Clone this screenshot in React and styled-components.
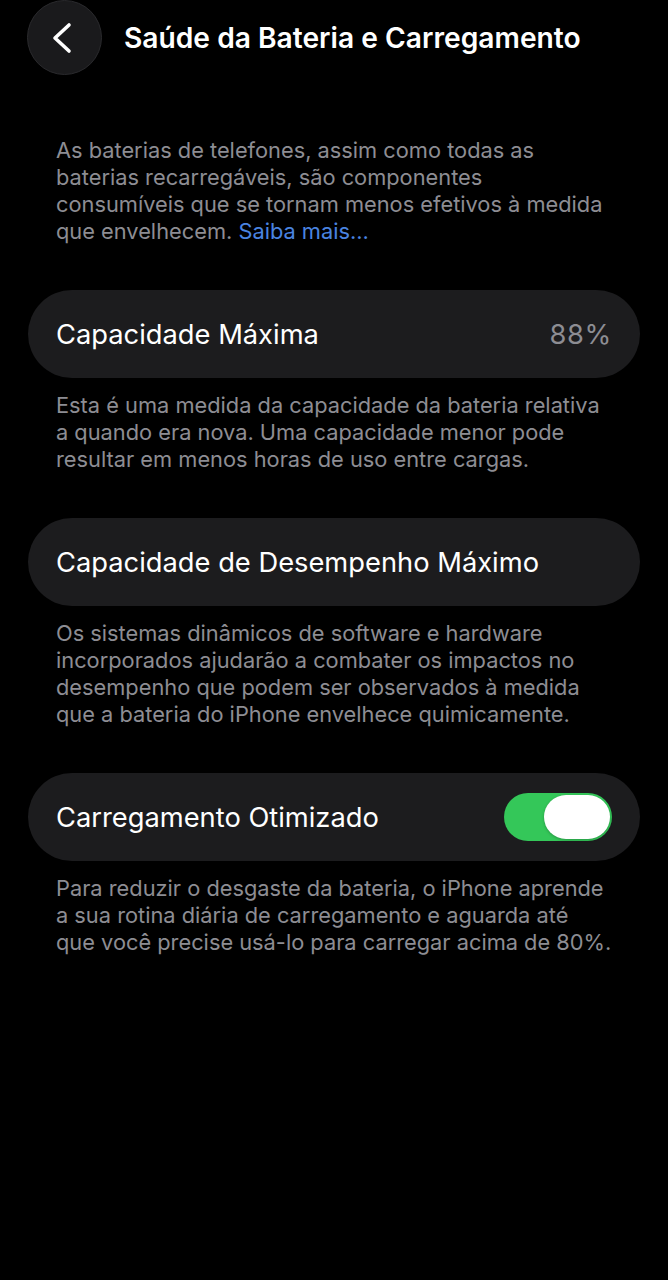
import React from "react";
import styled, { createGlobalStyle } from "styled-components";

const GlobalStyle = createGlobalStyle`
  html, body {
    margin: 0;
    padding: 0;
    background: #000;
  }
  body {
    font-family: Inter, "Noto Sans", "Liberation Sans", sans-serif;
    -webkit-font-smoothing: antialiased;
  }
`;

const sections = [
  {
    id: "capacity",
    label: "Capacidade Máxima",
    value: "88%",
    footer: [
      "Esta é uma medida da capacidade da bateria relativa",
      "a quando era nova. Uma capacidade menor pode",
      "resultar em menos horas de uso entre cargas.",
    ],
  },
  {
    id: "performance",
    label: "Capacidade de Desempenho Máximo",
    footer: [
      "Os sistemas dinâmicos de software e hardware",
      "incorporados ajudarão a combater os impactos no",
      "desempenho que podem ser observados à medida",
      "que a bateria do iPhone envelhece quimicamente.",
    ],
  },
  {
    id: "optimized",
    label: "Carregamento Otimizado",
    toggle: true,
    footer: [
      "Para reduzir o desgaste da bateria, o iPhone aprende",
      "a sua rotina diária de carregamento e aguarda até",
      "que você precise usá-lo para carregar acima de 80%.",
    ],
  },
];

const Lines = ({ lines }) =>
  lines.map((l, i) => (
    <React.Fragment key={i}>
      {l}
      {i < lines.length - 1 && <br />}
    </React.Fragment>
  ));

const App = () => {
  return (
    <Screen>
      <GlobalStyle />
      <Header>
        <BackButton aria-label="Voltar">
          <svg width="24" height="32" viewBox="0 0 24 32" fill="none">
            <path
              d="M19 3 L5 16 L19 29"
              stroke="#fff"
              strokeWidth="3.6"
              strokeLinecap="round"
              strokeLinejoin="round"
            />
          </svg>
        </BackButton>
        <Title>Saúde da Bateria e Carregamento</Title>
      </Header>

      <Intro>
        As baterias de telefones, assim como todas as
        <br />
        baterias recarregáveis, são componentes
        <br />
        consumíveis que se tornam menos efetivos à medida
        <br />
        que envelhecem. <Link href="#">Saiba mais...</Link>
      </Intro>

      {sections.map((s) => (
        <Section key={s.id}>
          <Card>
            <Label>{s.label}</Label>
            {s.value && <Value>{s.value}</Value>}
            {s.toggle && (
              <Switch $on>
                <Knob />
              </Switch>
            )}
          </Card>
          <Footer>
            <Lines lines={s.footer} />
          </Footer>
        </Section>
      ))}
    </Screen>
  );
};

export default App;

const Screen = styled.div`
  min-height: 1280px;
  background: #000;
  color: #fff;
  display: flex;
  flex-direction: column;
`;

const Header = styled.div`
  display: flex;
  align-items: center;
  gap: 22px;
  padding: 0 0 0 27px;
  height: 75px;
`;

const BackButton = styled.button`
  width: 75px;
  height: 75px;
  border-radius: 50%;
  background: #1a1a1c;
  border: 1px solid #2a2a2d;
  display: flex;
  align-items: center;
  justify-content: center;
  padding: 0 5px 0 0;
  cursor: pointer;
  flex-shrink: 0;
`;

const Title = styled.h1`
  margin: 0;
  font-size: 28.2px;
  font-weight: 600;
  letter-spacing: 0;
  color: #fff;
`;

const Intro = styled.p`
  margin: 62px 0 0;
  padding: 0 56px;
  font-size: 21.8px;
  line-height: 27px;
  color: #8d8d93;
`;

const Link = styled.a`
  color: #4a84e0;
  text-decoration: none;
`;

const Section = styled.section`
  margin-top: 45px;
  padding: 0 28px;
`;

const Card = styled.div`
  height: 88px;
  border-radius: 44px;
  background: #1c1c1e;
  display: flex;
  align-items: center;
  justify-content: space-between;
  padding: 0 28px;
`;

const Label = styled.span`
  font-size: 27.3px;
  font-weight: 400;
  color: #fff;
`;

const Value = styled.span`
  font-size: 27.3px;
  color: #8d8d93;
  letter-spacing: 0.6px;
`;

const Switch = styled.div`
  width: 108px;
  height: 48px;
  border-radius: 24px;
  background: ${(p) => (p.$on ? "#34c759" : "#39393d")};
  display: flex;
  align-items: center;
  justify-content: ${(p) => (p.$on ? "flex-end" : "flex-start")};
  padding: 0 2px;
  box-sizing: border-box;
`;

const Knob = styled.div`
  width: 66px;
  height: 44px;
  border-radius: 22px;
  background: #fff;
  box-shadow: 0 1px 3px rgba(0, 0, 0, 0.25);
`;

const Footer = styled.p`
  margin: 14px 0 0;
  padding: 0 28px;
  font-size: 21.8px;
  line-height: 27px;
  color: #8d8d93;
`;
